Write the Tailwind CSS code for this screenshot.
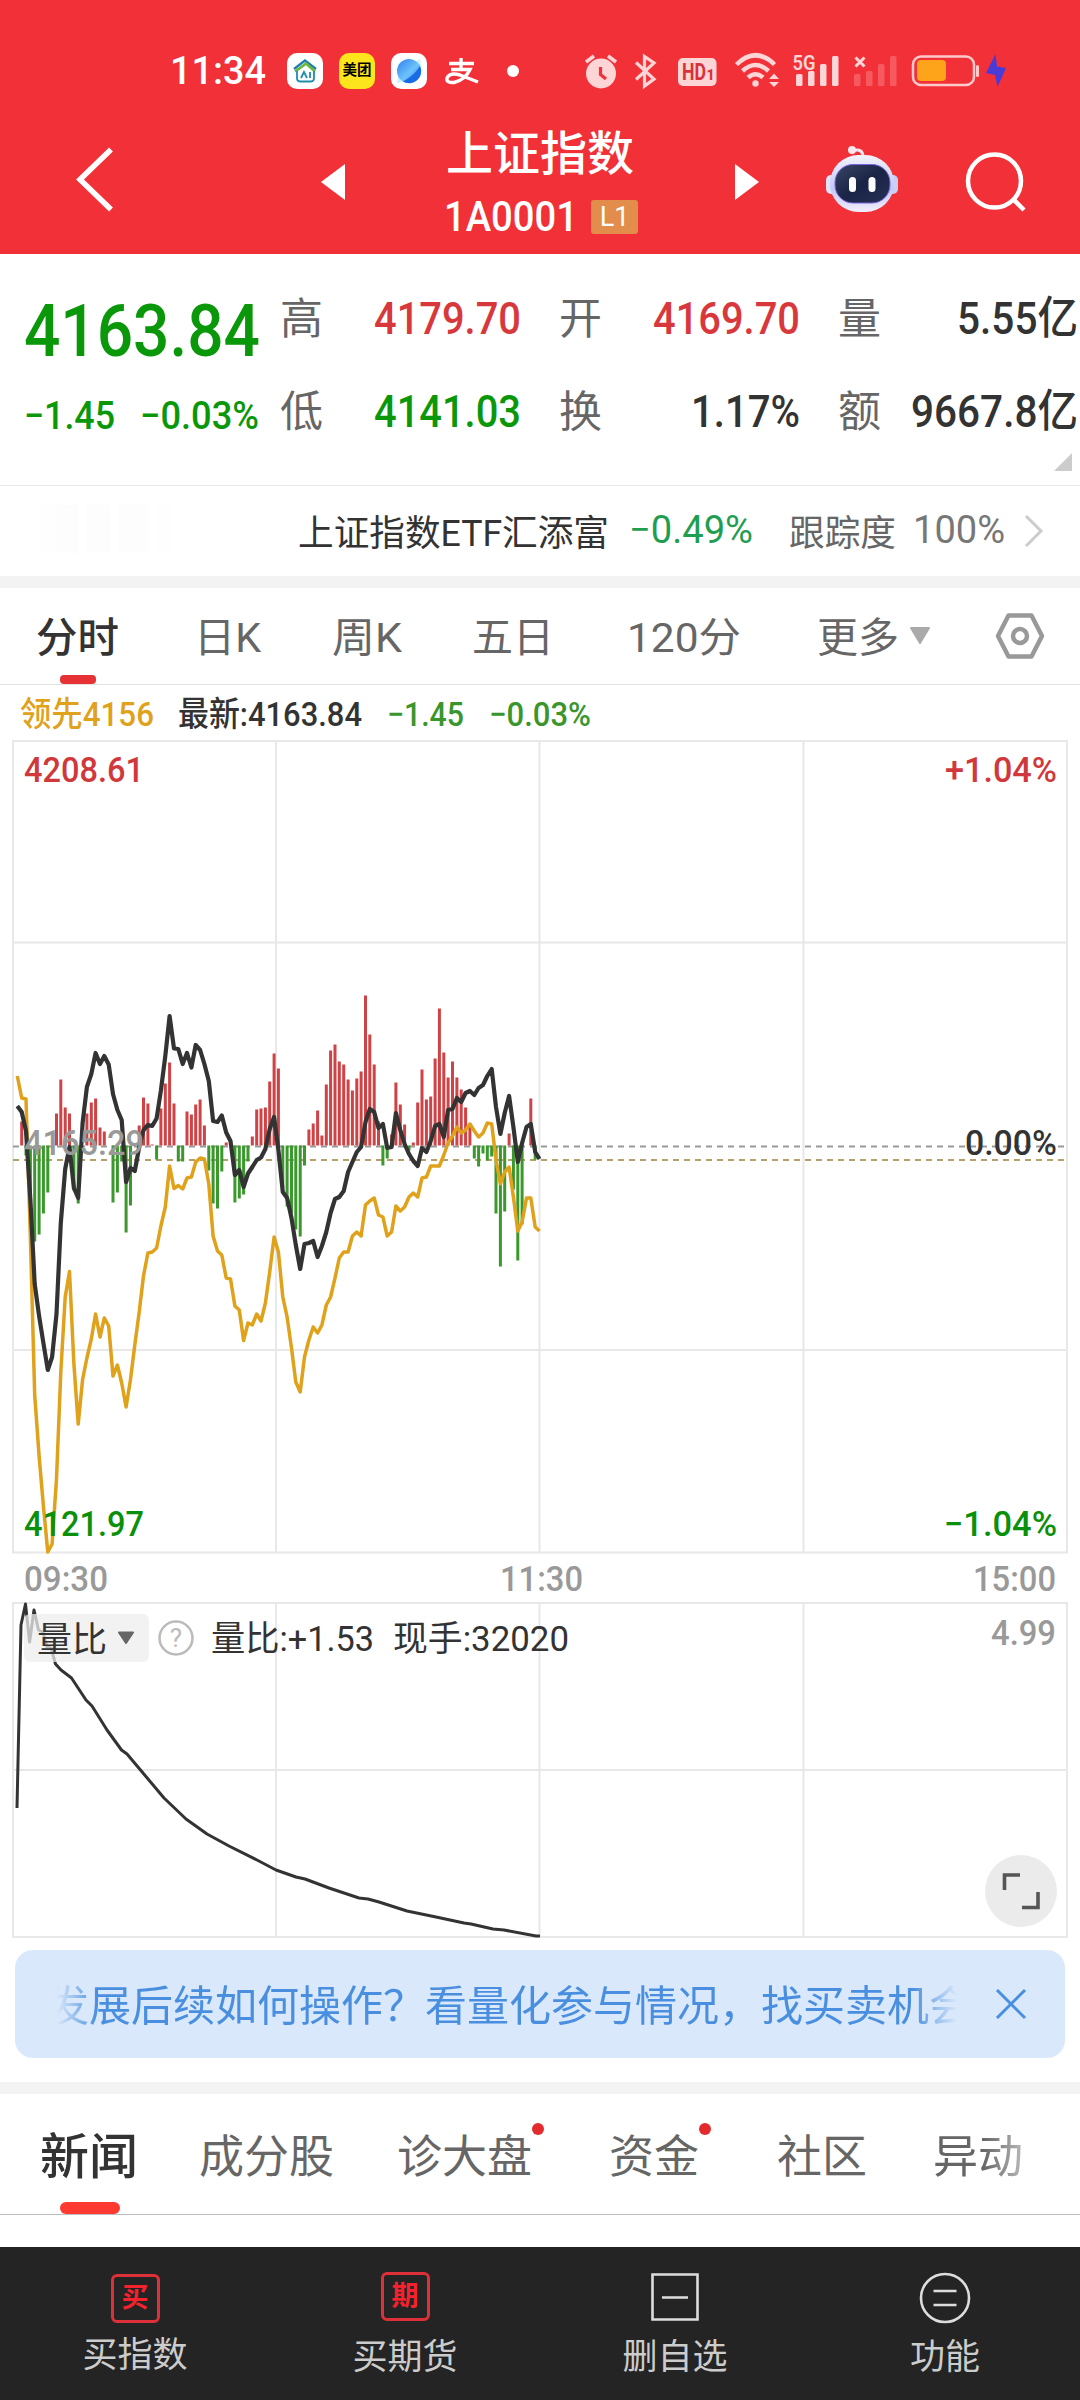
<!DOCTYPE html>
<html lang="zh-CN">
<head>
    <meta charset="UTF-8">
    <meta name="viewport" content="width=device-width, initial-scale=1.0">
    <title>上证指数 1A0001</title>
    <script src="https://cdn.jsdelivr.net/npm/@tailwindcss/browser@4"></script>
</head>
<body class="w-[1080px] h-[2400px] overflow-hidden bg-white text-[#333] font-[Roboto,'Noto_Sans_CJK_SC',sans-serif] whitespace-nowrap">

    <!-- header -->
    <header class="h-[254px] bg-[#f13037] text-white">
        <div class="h-[142px] flex items-center">
            <span data-w="96" class="ml-[170px] text-[38px] font-medium">11:34</span>
            <svg class="ml-[21px] shrink-0" width="36" height="36" viewBox="0 0 36 36">
                <rect width="36" height="36" rx="10" fill="#fff"/>
                <path d="M7 16 L18 7.500 L29 16" fill="none" stroke="#1d7fb0" stroke-width="2.400"/>
                <path d="M8 18.500 Q16 13 19 10.500 L28 18.500" fill="none" stroke="#6cb83c" stroke-width="2.600"/>
                <path d="M10 18 V25 Q10 28.500 13 28.500 H24 Q27 28.500 27 25 V18" fill="none" stroke="#1d8fae" stroke-width="1.800"/>
                <path d="M14 25 L17 19 L20 25 M23 19 V25" fill="none" stroke="#1d8fae" stroke-width="1.800"/>
            </svg>
            <div class="ml-4 w-9 h-9 shrink-0 rounded-[10px] bg-[#fde51e] text-black text-[14.5px] leading-9 font-bold text-center">美团</div>
            <svg class="ml-4 shrink-0" width="36" height="36" viewBox="0 0 36 36">
                <defs>
                    <linearGradient id="ball" x1="0" y1="0" x2="1" y2="1">
                        <stop offset="0" stop-color="#2f7df0"/><stop offset=".55" stop-color="#6dc4fb"/><stop offset="1" stop-color="#1766e8"/>
                    </linearGradient>
                </defs>
                <rect width="36" height="36" rx="10" fill="#fff"/>
                <path d="M6 30 L8 18 L29 6 L30 14 L12 29 Z" fill="#cdeefd"/>
                <circle cx="18" cy="18" r="12" fill="url(#ball)"/>
                <path d="M29 13 A12 12 0 0 1 12 28.500 Q24 22 29 13" fill="#1a6be6"/>
            </svg>
            <svg class="ml-[17px] shrink-0" width="36" height="30" viewBox="444 56 36 30">
                <path d="M449 63.500 H474 M461 58 V69 M451 69.500 H470 Q465 80 454 82.500 Q446 83 447 78 Q450 72 460 75 L478 82" fill="none" stroke="#fff" stroke-width="3.400"/>
            </svg>
            <div class="ml-[27px] w-3 h-3 shrink-0 rounded-full bg-white"></div>
            <svg class="ml-[66px] shrink-0" width="430" height="40" viewBox="585 51 430 40">
                <g fill="#fdd5d7">
                    <circle cx="601" cy="73.500" r="15"/>
                    <path d="M586 62 L594 56 M616 62 L608 56" stroke="#fdd5d7" stroke-width="3.500" fill="none"/>
                    <path d="M600.500 67 V74.500 L606 79" stroke="#f13037" stroke-width="3.200" fill="none"/>
                    <path d="M636 62.500 L654 79 L644.500 86 V56.500 L654 63 L636 79.500" stroke="#fdd5d7" stroke-width="3.200" fill="none"/>
                    <rect x="678" y="58" width="38.500" height="28" rx="5"/>
                    <g fill="none" stroke="#fdd5d7" stroke-width="4.500">
                        <path d="M736.500 64.500 Q755.500 46 774.500 64.500"/>
                        <path d="M742.500 71 Q755.500 59 768.500 71"/>
                        <path d="M748 77.500 Q755.500 71 763 77.500"/>
                    </g>
                    <circle cx="755.500" cy="83.500" r="3.200"/>
                    <path d="M769 79 L774 73.500 L779 79 Z M769 82 L774 87 L779 82 Z"/>
                    <rect x="796" y="74" width="6.500" height="12" rx="1.500"/>
                    <rect x="808" y="71" width="6.500" height="15" rx="1.500"/>
                    <rect x="820" y="64" width="6.500" height="22" rx="1.500"/>
                    <rect x="832" y="56" width="6.500" height="30" rx="1.500"/>
                    <path d="M855.500 57.500 L864.500 66.500 M864.500 57.500 L855.500 66.500" stroke="#fdd5d7" stroke-width="3"/>
                </g>
                <g fill="#f65a60">
                    <rect x="854" y="74" width="6.500" height="12" rx="1.500"/>
                    <rect x="866" y="71" width="6.500" height="15" rx="1.500"/>
                    <rect x="878" y="64" width="6.500" height="22" rx="1.500"/>
                    <rect x="890" y="56" width="6.500" height="30" rx="1.500"/>
                </g>
                <text x="682" y="80" font-size="23" font-weight="700" fill="#d8323c" textLength="24" lengthAdjust="spacingAndGlyphs">HD</text>
                <text x="706.500" y="80" font-size="14" font-weight="900" fill="#d8323c">1</text>
                <text x="792.500" y="69.500" font-size="21" font-weight="600" fill="#fdd5d7" textLength="23" lengthAdjust="spacingAndGlyphs">5G</text>
                <rect x="913" y="56.500" width="61" height="28.500" rx="8" fill="none" stroke="#fdc9cb" stroke-width="2.500"/>
                <rect x="976" y="65" width="3" height="12" rx="1.500" fill="#fdc9cb"/>
                <rect x="917" y="60" width="29" height="21" rx="4" fill="#fda41b"/>
                <path d="M995.500 54 L986 73 L995 75 L997.500 87 L1006 68 L997 66.500 Z" fill="#4b3bd6"/>
            </svg>
        </div>
        <div class="h-[112px] flex -mt-[24px] pt-[6px]">
            <svg class="ml-[74px] mt-[20px] shrink-0" width="42" height="70" viewBox="74 144 42 70">
                <path d="M111 149.500 L80 179.500 L111 209.500" fill="none" stroke="#fff" stroke-width="5.500"/>
            </svg>
            <svg class="ml-[205px] mt-[40px] shrink-0" width="24" height="36" viewBox="0 0 24 36"><path d="M0 18 L24 0 V36 Z" fill="#fff"/></svg>
            <div class="ml-[40px] w-[310px] shrink-0 flex flex-col items-center">
                <div class="text-[47px] leading-[60px] font-medium">上证指数</div>
                <div class="h-[44px] flex items-center mt-[12px] ml-[2px]">
                    <span data-w="134" class="text-[42px] font-medium">1A0001</span>
                    <span class="ml-[13px] w-[47px] h-[34px] rounded-[3px] bg-[#e28d4c] text-[27px] leading-[34px] text-center">L1</span>
                </div>
            </div>
            <svg class="ml-[40px] mt-[40px] shrink-0" width="24" height="36" viewBox="0 0 24 36"><path d="M24 18 L0 0 V36 Z" fill="#fff"/></svg>
            <svg class="ml-[64px] mt-[19px] shrink-0" width="78" height="72" viewBox="822 143 78 72">
                <defs>
                    <linearGradient id="shell" x1="0" y1="0" x2="0" y2="1">
                        <stop offset="0" stop-color="#f3f3fb"/><stop offset=".6" stop-color="#c4c8f6"/><stop offset="1" stop-color="#f2eefb"/>
                    </linearGradient>
                    <linearGradient id="visor" x1="0" y1="0" x2="1" y2="1">
                        <stop offset="0" stop-color="#3a4566"/><stop offset=".5" stop-color="#1a2445"/><stop offset="1" stop-color="#253056"/>
                    </linearGradient>
                </defs>
                <path d="M852 150.500 Q862 148 862 157" fill="none" stroke="#f3e6f2" stroke-width="3"/>
                <circle cx="851" cy="150" r="4" fill="#f9e6ee"/>
                <rect x="825" y="175" width="12" height="19" rx="5" fill="#dfe4fb"/>
                <rect x="885" y="175" width="12" height="19" rx="5" fill="#c9d0f8"/>
                <rect x="829" y="155" width="64" height="57" rx="28.500" fill="url(#shell)"/>
                <rect x="834" y="164.500" width="55" height="38.500" rx="18" fill="url(#visor)" stroke="#7a63e0" stroke-width="1"/>
                <rect x="848" y="177" width="7" height="15" rx="3.500" fill="#fff"/>
                <rect x="867.500" y="177" width="7" height="15" rx="3.500" fill="#fff"/>
            </svg>
            <svg class="ml-[61px] mt-[23px] shrink-0" width="66" height="68" viewBox="962 147 66 68">
                <circle cx="994.500" cy="181" r="26.500" fill="none" stroke="#fff" stroke-width="4.500"/>
                <path d="M1013 199 L1024 210" stroke="#fff" stroke-width="4.500"/>
            </svg>
        </div>
    </header>

    <!-- quote -->
    <section class="relative h-[231px] flex">
        <div class="w-[280px] shrink-0 pl-[24px] pt-[37px] text-[#0a980a]">
            <div class="h-[80px] flex items-center text-[73px] font-medium"><span data-w="236">4163.84</span></div>
            <div class="mt-[20px] h-[48px] flex items-center text-[39px] font-medium">
                <span data-w="91">−1.45</span>
                <span data-w="119" class="ml-[25px]">−0.03%</span>
            </div>
        </div>
        <div class="w-[798px] shrink-0 mt-[18px] h-[186px] grid grid-cols-3 grid-rows-2 gap-x-[39px] text-[45px] leading-[60px] font-medium">
            <div class="flex items-center justify-between"><span class="text-[43px] font-normal text-[#666]">高</span><span data-w="147" class="-mr-[1px] text-[#d8383c]">4179.70</span></div>
            <div class="flex items-center justify-between"><span class="text-[43px] font-normal text-[#666]">开</span><span data-w="147" class="-mr-[1px] text-[#d8383c]">4169.70</span></div>
            <div class="flex items-center justify-between"><span class="text-[43px] font-normal text-[#666]">量</span><span data-w="121">5.55亿</span></div>
            <div class="flex items-center justify-between"><span class="text-[43px] font-normal text-[#666]">低</span><span data-w="147" class="-mr-[1px] text-[#0a980a]">4141.03</span></div>
            <div class="flex items-center justify-between"><span class="text-[43px] font-normal text-[#666]">换</span><span data-w="109" class="-mr-[1px]">1.17%</span></div>
            <div class="flex items-center justify-between"><span class="text-[43px] font-normal text-[#666]">额</span><span data-w="167">9667.8亿</span></div>
        </div>
        <svg class="absolute right-[8px] bottom-[14px]" width="18" height="18"><path d="M18 0 V18 H0 Z" fill="#ccc"/></svg>
    </section>

    <!-- tracking fund -->
    <section class="h-[91px] border-t border-[#e8e8e8] flex items-center text-[36px]">
        <div class="ml-[33px] w-[165px] h-[48px] flex gap-2 shrink-0 -mt-1">
            <i class="w-[45px] bg-gradient-to-r from-white to-[#fcfcfc]"></i><i class="w-[24px] bg-[#fdfdfd]"></i><i class="w-[30px] bg-[#fdfdfd]"></i><i class="w-[16px] bg-[#fefefe]"></i>
        </div>
        <span data-w="311" class="ml-[100px] mt-[5px]">上证指数ETF汇添富</span>
        <span data-w="124" class="ml-[20px] -mt-[3px] text-[39px] text-[#1f9e52]">−0.49%</span>
        <span data-w="107" class="ml-[36px] mt-[5px] text-[#666]">跟踪度</span>
        <span data-w="92" class="ml-[17px] -mt-[3px] text-[39px] text-[#777]">100%</span>
        <svg class="ml-[19px] shrink-0" width="20" height="34" viewBox="0 0 20 34"><path d="M2 2 L17 17 L2 32" fill="none" stroke="#ccc" stroke-width="3"/></svg>
    </section>
    <div class="h-3 bg-[#f3f3f3]"></div>

    <!-- period tabs -->
    <nav class="relative h-[97px] border-b border-[#e2e2e2] flex items-center text-[41px] text-[#666] pt-[2px]">
        <span data-w="83" class="ml-[36px] text-[#333] font-medium">分时</span>
        <span data-w="67" class="ml-[75px]">日K</span>
        <span data-w="70" class="ml-[71px]">周K</span>
        <span data-w="82" class="ml-[70px]">五日</span>
        <span data-w="114" class="ml-[73px]">120分</span>
        <span data-w="82" class="ml-[76px]">更多</span>
        <svg class="ml-[10px] -mt-[3px] shrink-0" width="22" height="18" viewBox="0 0 22 18"><path d="M2 1 H20 L11 16 Z" fill="#aaa" stroke="#aaa" stroke-width="2" stroke-linejoin="round"/></svg>
        <svg class="ml-[64px] -mt-[3px] shrink-0" width="50" height="46" viewBox="0 0 50 46">
            <path d="M13.500 2.500 H36.500 L47 23 L36.500 43.500 H13.500 L3 23 Z" fill="none" stroke="#999" stroke-width="4.500" stroke-linejoin="round"/>
            <circle cx="25" cy="23" r="7" fill="none" stroke="#999" stroke-width="4.500"/>
        </svg>
        <div class="absolute left-[60px] bottom-0 w-9 h-[9px] rounded-[4px] bg-[#e63235]"></div>
    </nav>

    <!-- legend -->
    <div class="h-[55px] flex items-center text-[34px] font-medium pt-[3px]">
        <span data-w="134" class="ml-[20px] text-[#e0a11b]">领先4156</span>
        <span data-w="184" class="ml-[24px]">最新:4163.84</span>
        <span data-w="77" class="ml-[25px] text-[#3a962c]">−1.45</span>
        <span data-w="102" class="ml-[25px] text-[#3a962c]">−0.03%</span>
    </div>

    <!-- minute chart and volume ratio chart -->
    <div class="relative">
        <svg id="chart" class="block" width="1080" height="1202" viewBox="0 740 1080 1202" font-weight="500" font-size="35">
            <g fill="none" stroke="#e8e8e8" stroke-width="2">
                <path d="M13 741 H1067 V1552.500 H13 Z M13 942.500 H1067 M13 1350 H1067 M276 741 V1552 M539.500 741 V1552 M803.500 741 V1552"/>
                <path d="M13 1603 H1067 V1937 H13 Z M13 1770 H1067 M276 1603 V1937 M539.500 1603 V1937 M803.500 1603 V1937"/>
            </g>
            <path d="M13 1146.500 H1067" stroke="#999" stroke-width="1.800" stroke-dasharray="6 5"/>
            <path d="M13 1160 H1067" stroke="#b5a06c" stroke-width="1.800" stroke-dasharray="6 5"/>
            <g id="bars"></g>
            <polyline id="lead" fill="none" stroke="#e0a11b" stroke-width="3.500" stroke-linejoin="round"/>
            <polyline id="price" fill="none" stroke="#333" stroke-width="4.200" stroke-linejoin="round"/>
            <polyline id="ratio" fill="none" stroke="#333" stroke-width="3" stroke-linejoin="round"
                points="17,1808 21,1625 25.5,1604 29.6,1642 34,1610 38.5,1630 43,1632 47,1647 51,1648 55.5,1664 61,1670 71.5,1678 86,1700 92,1706 107,1730 121.5,1750 127,1754 143,1773 164,1798 186,1819 207,1834 229,1846 257,1860 276,1870 296,1877 305,1879 329,1888 359,1898 368,1899 379,1902 407,1911 436,1917 464,1923 471,1924 493,1929 504,1930 536,1936 540,1936"/>
            <text x="24" y="782" fill="#d0383c" textLength="120" lengthAdjust="spacingAndGlyphs">4208.61</text>
            <text x="945" y="782" fill="#d0383c" textLength="112" lengthAdjust="spacingAndGlyphs">+1.04%</text>
            <text x="24" y="1155" fill="#999" textLength="120" lengthAdjust="spacingAndGlyphs">4165.29</text>
            <text x="965" y="1155" fill="#333" textLength="92" lengthAdjust="spacingAndGlyphs">0.00%</text>
            <text x="24" y="1536" fill="#0a900a" textLength="120" lengthAdjust="spacingAndGlyphs">4121.97</text>
            <text x="944" y="1536" fill="#0a900a" textLength="113" lengthAdjust="spacingAndGlyphs">−1.04%</text>
            <g fill="#999">
                <text x="24" y="1590.500" textLength="84" lengthAdjust="spacingAndGlyphs">09:30</text>
                <text x="500" y="1590.500" textLength="83" lengthAdjust="spacingAndGlyphs">11:30</text>
                <text x="973" y="1590.500" textLength="83" lengthAdjust="spacingAndGlyphs">15:00</text>
                <text x="991" y="1645" textLength="65" lengthAdjust="spacingAndGlyphs">4.99</text>
            </g>
        </svg>
        <div class="absolute left-[24px] top-[874px] h-[48px] flex items-center text-[35px]">
            <div class="w-[125px] h-[48px] rounded-[6px] bg-[#eeeeee]/75 flex items-center pl-[13px]">
                <span data-w="70" class="mt-[5px]">量比</span>
                <svg class="ml-[10px] shrink-0" width="18" height="14" viewBox="0 0 18 14"><path d="M2 1.500 H16 L9 12 Z" fill="#666" stroke="#666" stroke-width="2" stroke-linejoin="round"/></svg>
            </div>
            <svg class="ml-[9px] shrink-0" width="36" height="36" viewBox="0 0 36 36">
                <circle cx="18" cy="18" r="16.500" fill="none" stroke="#bbb" stroke-width="2.500"/>
                <text x="18" y="27" font-size="26" fill="#bbb" text-anchor="middle">?</text>
            </svg>
            <span data-w="163" class="ml-[17px] mt-[3px]">量比:+1.53</span>
            <span data-w="176" class="ml-[19px] mt-[3px]">现手:32020</span>
        </div>
        <div class="absolute left-[985px] top-[1115px] w-[72px] h-[72px] rounded-full bg-[#ebebeb]">
            <svg width="72" height="72" viewBox="985 1855 72 72"><path d="M1004.500 1890 V1875 H1020 M1038 1892 V1907.500 H1022" fill="none" stroke="#555" stroke-width="3.600"/></svg>
        </div>
    </div>

    <!-- promo strip -->
    <div class="mt-[8px] ml-[15px] w-[1050px] h-[108px] rounded-[18px] bg-[#d9e8fa] flex items-center text-[#4a8fdf]">
        <div class="ml-[42px] mt-[5px] w-[900px] overflow-hidden text-[42px] leading-[60px] mask-[linear-gradient(to_right,transparent,#000_40px,#000_856px,transparent)]">
            <span class="inline-block -ml-[10px]">发展后续如何操作？看量化参与情况，找买卖机会</span>
        </div>
        <svg class="ml-[38px] shrink-0" width="32" height="32" viewBox="0 0 32 32"><path d="M2 2 L30 30 M30 2 L2 30" stroke="#4a8fdf" stroke-width="3" fill="none"/></svg>
    </div>
    <div class="mt-6 h-3 bg-[#f3f3f3]"></div>

    <!-- content tabs -->
    <nav class="relative h-[121px] border-b border-[#bdbdbd] flex items-center text-[45px] leading-[60px] text-[#666] pt-[7px]">
        <span class="ml-[40px] text-[49px] font-medium text-[#333]">新闻</span>
        <span class="ml-[61px]">成分股</span>
        <span class="relative ml-[63px]">诊大盘<i class="absolute -right-[12px] -top-[5px] w-3 h-3 rounded-full bg-[#e32a2c]"></i></span>
        <span class="relative ml-[77px]">资金<i class="absolute -right-[12px] -top-[5px] w-3 h-3 rounded-full bg-[#e32a2c]"></i></span>
        <span class="ml-[78px]">社区</span>
        <span class="ml-[66px] mask-[linear-gradient(to_right,#000_55%,#0007)]">异动</span>
        <div class="absolute left-[60px] bottom-0 w-[60px] h-3 rounded-full bg-[#fc3a32]"></div>
    </nav>

    <!-- bottom bar -->
    <footer class="mt-8 h-[153px] bg-[#242424] grid grid-cols-4 text-[35px] leading-[44px] text-[#ccc]">
        <div class="flex flex-col items-center pt-[27px]">
            <div class="w-[49px] h-[49px] rounded-[6px] border-3 border-[#dd3038] text-[#f5222d] text-[27px] leading-[43px] font-bold text-center">买</div>
            <span class="mt-[11px]">买指数</span>
        </div>
        <div class="flex flex-col items-center pt-[25px]">
            <div class="w-[49px] h-[49px] rounded-[6px] border-3 border-[#dd3038] text-[#f5222d] text-[27px] leading-[43px] font-bold text-center">期</div>
            <span class="mt-[15px]">买期货</span>
        </div>
        <div class="flex flex-col items-center pt-[26px]">
            <svg width="48" height="48" viewBox="0 0 48 48"><path d="M1.500 1.500 H46.500 V46.500 H1.500 Z M11 24.500 H37" fill="none" stroke="#ddd" stroke-width="2.600"/></svg>
            <span class="mt-[15px]">删自选</span>
        </div>
        <div class="flex flex-col items-center pt-[25px]">
            <svg width="52" height="52" viewBox="0 0 52 52"><circle cx="26" cy="26" r="24" fill="none" stroke="#ddd" stroke-width="2.600"/><path d="M14.500 19 H37.500 M14.500 33 H37.500" stroke="#ddd" stroke-width="2.600"/></svg>
            <span class="mt-[12px]">功能</span>
        </div>
    </footer>

    <script>
        // the quote font is narrower than Roboto: squeeze each text to its data-w width
        document.querySelectorAll("[data-w]").forEach(function (el) {
            const w = el.dataset.w;
            el.style.flexShrink = 0;
            el.innerHTML = '<svg width="' + w + '" style="height:1em;overflow:visible"><text style="transform:translateY(.842em)" fill="currentColor" textLength="' +
                w + '" lengthAdjust="spacingAndGlyphs">' + el.textContent + '</text></svg>';
        });

        const price = [1106,1112,1131,1200,1284,1316,1343,1370,1357,1314,1223,1169,1147,1188,1198,1123,1087,1074,1053,1064,
            1056,1064.5,1094,1110,1120,1182,1168,1171,1147,1130,1125,1126,1118.5,1090.5,1056,1016,1048.5,1049,1064,1053,
            1067.5,1045,1050,1064,1081,1121,1122,1115.5,1132.5,1141,1175,1170,1187,1173.5,1167,1160,1157.5,1149,1129,1117,
            1150,1192,1198,1218,1245,1269,1244,1243,1241,1257,1246,1232,1213,1199,1197,1191,1172,1162,1152,1147,
            1122,1109,1112,1128,1124,1148,1147,1113,1130,1144,1154,1161,1166,1148,1152,1141,1126,1124,1137,1110,
            1109,1098,1102,1093,1091,1095,1088,1085,1076,1069,1107,1134,1113,1096,1127,1162,1143,1127,1124,1152,1159];
        const lead = [1076,1098,1099,1238,1395,1456,1506,1552,1544,1479,1372,1297,1271.5,1364,1424,1379.5,1358,1339,1314,1337,
            1318,1326,1376,1365,1383,1407,1379.5,1345,1312,1276,1253,1252,1248,1226,1207,1166,1188.5,1185.5,1189,1178,
            1177,1162,1158,1159,1184,1236,1251,1255,1278,1279,1306,1310,1340.5,1323,1325,1314,1321,1303,1272,1237,
            1252,1297,1317,1348,1382,1392,1357,1340,1327,1333,1325,1305,1297,1278,1258,1252,1252,1236,1232,1236,
            1205,1201,1198,1215,1217,1236,1232,1206,1211,1207,1197,1193,1197,1178,1177,1166,1166,1166,1155,1143,
            1136,1127,1133,1130,1124,1131,1137,1133,1123,1124,1160,1184,1172,1167,1197,1231,1222,1198,1198,1227,1231];
        const bars = [0,24,-10,-75,-96,-89,-68,-47,0,32,66,38,32,-45,-58,0,32,43,47,18,
            14,0,-57,-47,-16,-87,-60,0,20,48,42,1,-14,37,62,83,42,-16,-16,34,
            31,41,46,20,-25,-58,-63,-26,3,0,-57,-53,-49,-16,9,36,37,38,64,92,
            77,-42,-61,-68,-84,-91,-20,16,22,35,10,61,95,101,84,81,66,55,67,74,
            150,111,81,24,-20,-13,11,63,41,21,-5,3,43,76,46,49,87,137,93,68,
            84,68,56,38,22,-13,-21,-8,-15,-11,-68,-121,-66,12,-44,-115,-79,0,47,-14,0];

        const xAt = i => (17.3 + i * 4.352).toFixed(1);
        const line = arr => arr.map((y, i) => xAt(i) + "," + y).join(" ");
        document.getElementById("price").setAttribute("points", line(price));
        document.getElementById("lead").setAttribute("points", line(lead));

        document.getElementById("bars").innerHTML = bars.map(function (v, i) {
            const y = v > 0 ? 1145.5 - v : 1145.5;
            return '<rect x="' + (xAt(i) - 1.5) + '" y="' + y + '" width="3" height="' + Math.abs(v) +
                '" fill="' + (v > 0 ? "#cf4245" : "#3a982c") + '"/>';
        }).join("");
    </script>
</body>
</html>
